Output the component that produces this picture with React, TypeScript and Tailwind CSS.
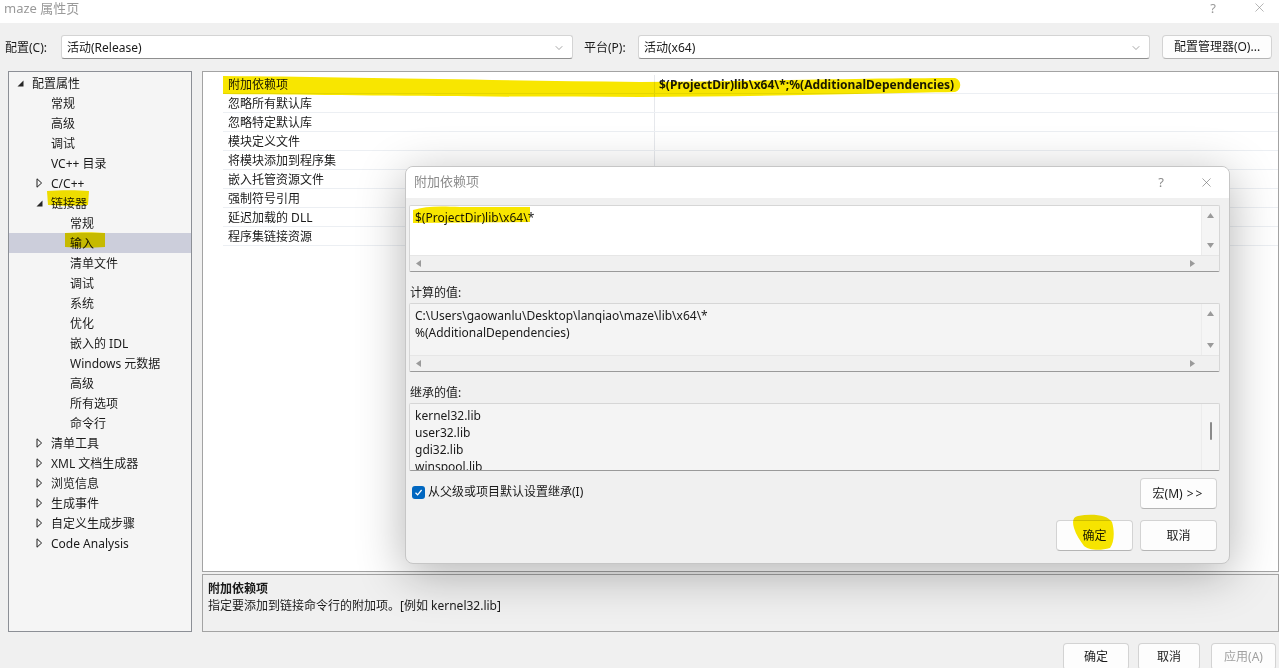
import { ChevronDown, X } from 'lucide-react'

type TreeNode = {
  label: string
  level: 0 | 1 | 2
  state?: 'open' | 'closed'
  selected?: boolean
}

const tree: TreeNode[] = [
  { label: '配置属性', level: 0, state: 'open' },
  { label: '常规', level: 1 },
  { label: '高级', level: 1 },
  { label: '调试', level: 1 },
  { label: 'VC++ 目录', level: 1 },
  { label: 'C/C++', level: 1, state: 'closed' },
  { label: '链接器', level: 1, state: 'open' },
  { label: '常规', level: 2 },
  { label: '输入', level: 2, selected: true },
  { label: '清单文件', level: 2 },
  { label: '调试', level: 2 },
  { label: '系统', level: 2 },
  { label: '优化', level: 2 },
  { label: '嵌入的 IDL', level: 2 },
  { label: 'Windows 元数据', level: 2 },
  { label: '高级', level: 2 },
  { label: '所有选项', level: 2 },
  { label: '命令行', level: 2 },
  { label: '清单工具', level: 1, state: 'closed' },
  { label: 'XML 文档生成器', level: 1, state: 'closed' },
  { label: '浏览信息', level: 1, state: 'closed' },
  { label: '生成事件', level: 1, state: 'closed' },
  { label: '自定义生成步骤', level: 1, state: 'closed' },
  { label: 'Code Analysis', level: 1, state: 'closed' },
]

const indent = ['w-[7px]', 'w-[26px]', 'w-[45px]']

const props = [
  '附加依赖项',
  '忽略所有默认库',
  '忽略特定默认库',
  '模块定义文件',
  '将模块添加到程序集',
  '嵌入托管资源文件',
  '强制符号引用',
  '延迟加载的 DLL',
  '程序集链接资源',
]

function Expanded() {
  return (
    <svg width="7" height="7" viewBox="0 0 7 7">
      <path d="M6.5 0.5 L6.5 6.5 L0.5 6.5 Z" fill="#262626" />
    </svg>
  )
}

function Collapsed() {
  return (
    <svg width="7" height="10" viewBox="0 0 7 10">
      <path d="M1 0.8 L5.6 5 L1 9.2 Z" fill="none" stroke="#1e1e1e" strokeWidth="1" />
    </svg>
  )
}

function Arrow({ dir }: { dir: 'up' | 'down' | 'left' | 'right' }) {
  const d = {
    up: 'M0 5 L3.5 0 L7 5 Z',
    down: 'M0 0 L7 0 L3.5 5 Z',
    left: 'M5 0 L5 7 L0 3.5 Z',
    right: 'M0 0 L5 3.5 L0 7 Z',
  }[dir]
  const vertical = dir === 'up' || dir === 'down'
  return (
    <svg width={vertical ? 7 : 5} height={vertical ? 5 : 7} viewBox={vertical ? '0 0 7 5' : '0 0 5 7'}>
      <path d={d} fill="#9a9a9a" />
    </svg>
  )
}

function Combo({ value }: { value: string }) {
  return (
    <div className="w-[512px] h-[24px] bg-white border border-[#d4d4d4] border-b-[#8f8f8f] rounded-[3px] flex items-center pl-[5px] pr-[7px] pt-[1px]">
      <span className="flex-1">{value}</span>
      <ChevronDown size={12} strokeWidth={1.2} className="text-[#6b6b6b]" />
    </div>
  )
}

function TreeView() {
  return (
    <div className="ml-[8px] w-[184px] h-[561px] border border-[#8c8f96] bg-[#f5f5f5] pt-[1px]">
      {tree.map((n, i) => (
        <div
          key={i}
          className={`h-[20px] flex items-center pt-[2px] ${n.selected ? 'bg-[#cccedb]' : ''}`}
        >
          <div className={indent[n.level]} />
          <div className="w-[16px] flex items-center pl-[1px] -mt-[2px]">
            {n.state === 'open' && <Expanded />}
            {n.state === 'closed' && <Collapsed />}
          </div>
          <span>{n.label}</span>
        </div>
      ))}
    </div>
  )
}

function PropertyGrid() {
  return (
    <div className="h-[501px] border border-[#a3a3a3] bg-white pt-[3px]">
      {props.map((p, i) => (
        <div key={i} className="h-[19px] flex">
          <div className="w-[20px]" />
          <div className="flex-1 flex border-b border-[#eceff3]">
            <div className="w-[432px] pl-[5px] pt-[1px] border-r border-[#e6e8ec] flex items-center">{p}</div>
            <div className="flex-1 pl-[4px] pt-[1px] flex items-center font-bold">
              {i === 0 ? '$(ProjectDir)lib\\x64\\*;%(AdditionalDependencies)' : ''}
            </div>
          </div>
        </div>
      ))}
    </div>
  )
}

function Button({ children, className = '' }: { children: React.ReactNode; className?: string }) {
  return (
    <div
      className={`bg-[#fdfdfd] border border-[#d3d3d3] border-b-[#b5b5b5] rounded-[4px] flex items-center justify-center ${className}`}
    >
      {children}
    </div>
  )
}

function EditBox({
  lines,
  readOnly,
  hScroll,
  thumb,
  height,
}: {
  lines: string[]
  readOnly?: boolean
  hScroll?: boolean
  thumb?: boolean
  height: string
}) {
  return (
    <div className={`${height} border border-[#d6d6d6] border-b-[#9a9a9a] rounded-[2px] flex flex-col overflow-hidden`}>
      <div className="flex-1 flex min-h-0">
        <div
          className={`flex-1 overflow-hidden pl-[5px] pt-[3px] leading-[17px] ${readOnly ? 'bg-[#f4f4f4]' : 'bg-white'}`}
        >
          {lines.map((l, i) => (
            <div key={i} className="whitespace-pre">{l}</div>
          ))}
        </div>
        <div className="w-[18px] bg-[#f5f5f5] border-l border-[#ececec] flex flex-col items-center justify-between py-[7px]">
          {thumb ? (
            <div className="mt-[11px] w-[2px] h-[18px] bg-[#8a8a8a] rounded-full" />
          ) : (
            <>
              <Arrow dir="up" />
              <Arrow dir="down" />
            </>
          )}
          {thumb && <div />}
        </div>
      </div>
      {hScroll && (
        <div className="h-[16px] bg-[#f0f0f0] flex items-center pl-[6px] pr-[24px] justify-between border-t border-[#e6e6e6]">
          <Arrow dir="left" />
          <Arrow dir="right" />
        </div>
      )}
    </div>
  )
}

function Dialog() {
  return (
    <div className="absolute left-[405px] top-[166px] w-[825px] h-[398px] rounded-[8px] border border-[#c6c6c6] bg-[#f0f0f0] shadow-[0_10px_48px_rgba(0,0,0,0.3)] overflow-hidden flex flex-col">
      <div className="h-[31px] bg-white flex items-center pl-[8px] text-[13px] text-[#8c8c8c]">
        <span className="flex-1 -mt-[1px]">附加依赖项</span>
        <span className="mr-[35px]">?</span>
        <X size={15} strokeWidth={1} className="mr-[15px] text-[#6e6e6e]" />
      </div>
      <div className="flex-1 pl-[3px] pr-[9px] pt-[7px] flex flex-col">
        <EditBox height="h-[67px]" lines={['$(ProjectDir)lib\\x64\\*']} hScroll />
        <div className="mt-[11px] h-[20px] flex items-center pl-[1px]">计算的值:</div>
        <EditBox
          height="h-[69px]"
          readOnly
          hScroll
          lines={['C:\\Users\\gaowanlu\\Desktop\\lanqiao\\maze\\lib\\x64\\*', '%(AdditionalDependencies)']}
        />
        <div className="mt-[11px] h-[20px] flex items-center pl-[1px]">继承的值:</div>
        <EditBox
          height="h-[68px]"
          readOnly
          thumb
          lines={['kernel32.lib', 'user32.lib', 'gdi32.lib', 'winspool.lib']}
        />
        <div className="mt-[7px] flex justify-between items-start">
          <div className="flex items-center ml-[3px] mt-[5px]">
            <div className="w-[13px] h-[13px] rounded-[3px] bg-[#0067c0] flex items-center justify-center">
              <svg width="9" height="9" viewBox="0 0 9 9">
                <path d="M1.5 4.8 L3.6 6.8 L7.6 2" fill="none" stroke="white" strokeWidth="1.2" />
              </svg>
            </div>
            <span className="ml-[3px]">从父级或项目默认设置继承(I)</span>
          </div>
          <Button className="w-[77px] h-[31px] mr-[3px]">
            宏(M) <span className="ml-[4px] tracking-[2px]">&gt;&gt;</span>
          </Button>
        </div>
        <div className="mt-[11px] flex justify-end gap-[7px] mr-[3px]">
          <Button className="w-[77px] h-[31px]">确定</Button>
          <Button className="w-[77px] h-[31px]">取消</Button>
        </div>
      </div>
    </div>
  )
}

function Highlights() {
  return (
    <svg
      className="absolute left-0 top-0 pointer-events-none mix-blend-multiply"
      width="1279"
      height="668"
      viewBox="0 0 1279 668"
    >
      <g fill="#f8e600">
        {/* property row */}
        <path d="M223 76 C 330 77, 470 80, 640 82 C 760 81, 880 78, 955 78 C 962 80, 962 90, 955 92 C 880 93, 760 97, 640 97 C 470 97, 330 95, 223 94 Z" />
        {/* tree: 链接器 */}
        <path d="M47 191 C 60 190, 78 190, 89 191 L 88 205 C 75 206, 60 206, 48 205 Z" />
        {/* tree: 输入 */}
        <path d="M65 233 C 80 232, 95 232, 105 233 L 105 247 C 92 248, 78 248, 65 247 Z" />
        {/* dialog edit text */}
        <path d="M413 210 C 425 206, 440 206, 460 207 L 530 207 L 530 222 L 413 223 Z" />
        {/* dialog OK button */}
        <path d="M1078 516 C 1092 513, 1108 515, 1112 522 C 1115 532, 1114 543, 1110 548 C 1100 551, 1088 550, 1084 546 C 1080 540, 1076 535, 1074 528 C 1072 521, 1073 517, 1078 516 Z" />
      </g>
    </svg>
  )
}

export default function App() {
  return (
    <div className="relative w-[1279px] h-[668px] overflow-hidden bg-[#f0f0f0] text-[12px] text-[#1a1a1a] font-['Noto_Sans','Noto_Sans_CJK_SC',sans-serif]">
      {/* title bar */}
      <div className="h-[23px] bg-white flex items-start pl-[4px] text-[13px] leading-[16px] text-[#9a9a9a]">
        <span className="flex-1">maze 属性页</span>
        <span className="mr-[36px]">?</span>
        <X size={15} strokeWidth={1} className="mr-[12px] text-[#8a8a8a]" />
      </div>

      {/* configuration toolbar */}
      <div className="h-[48px] flex items-center pl-[5px]">
        <span className="w-[56px] pt-[1px]">配置(C):</span>
        <Combo value="活动(Release)" />
        <span className="ml-[11px] w-[54px] pt-[1px]">平台(P):</span>
        <Combo value="活动(x64)" />
        <Button className="ml-[12px] w-[110px] h-[24px]">配置管理器(O)...</Button>
      </div>

      {/* main */}
      <div className="flex h-[561px]">
        <TreeView />
        <div className="ml-[10px] w-[1077px] flex flex-col">
          <PropertyGrid />
          <div className="mt-[2px] h-[58px] border border-[#a3a3a3] bg-[#f0f0f0] pl-[5px] pt-[5px] leading-[17px]">
            <div className="font-bold">附加依赖项</div>
            <div>指定要添加到链接命令行的附加项。[例如 kernel32.lib]</div>
          </div>
        </div>
      </div>

      {/* footer */}
      <div className="flex justify-end pr-[3px] pt-[11px]">
        <Button className="w-[66px] h-[27px]">确定</Button>
        <Button className="ml-[9px] w-[62px] h-[27px]">取消</Button>
        <Button className="ml-[11px] w-[65px] h-[27px] text-[#a0a0a0]">应用(A)</Button>
      </div>

      <Dialog />
      <Highlights />
    </div>
  )
}
